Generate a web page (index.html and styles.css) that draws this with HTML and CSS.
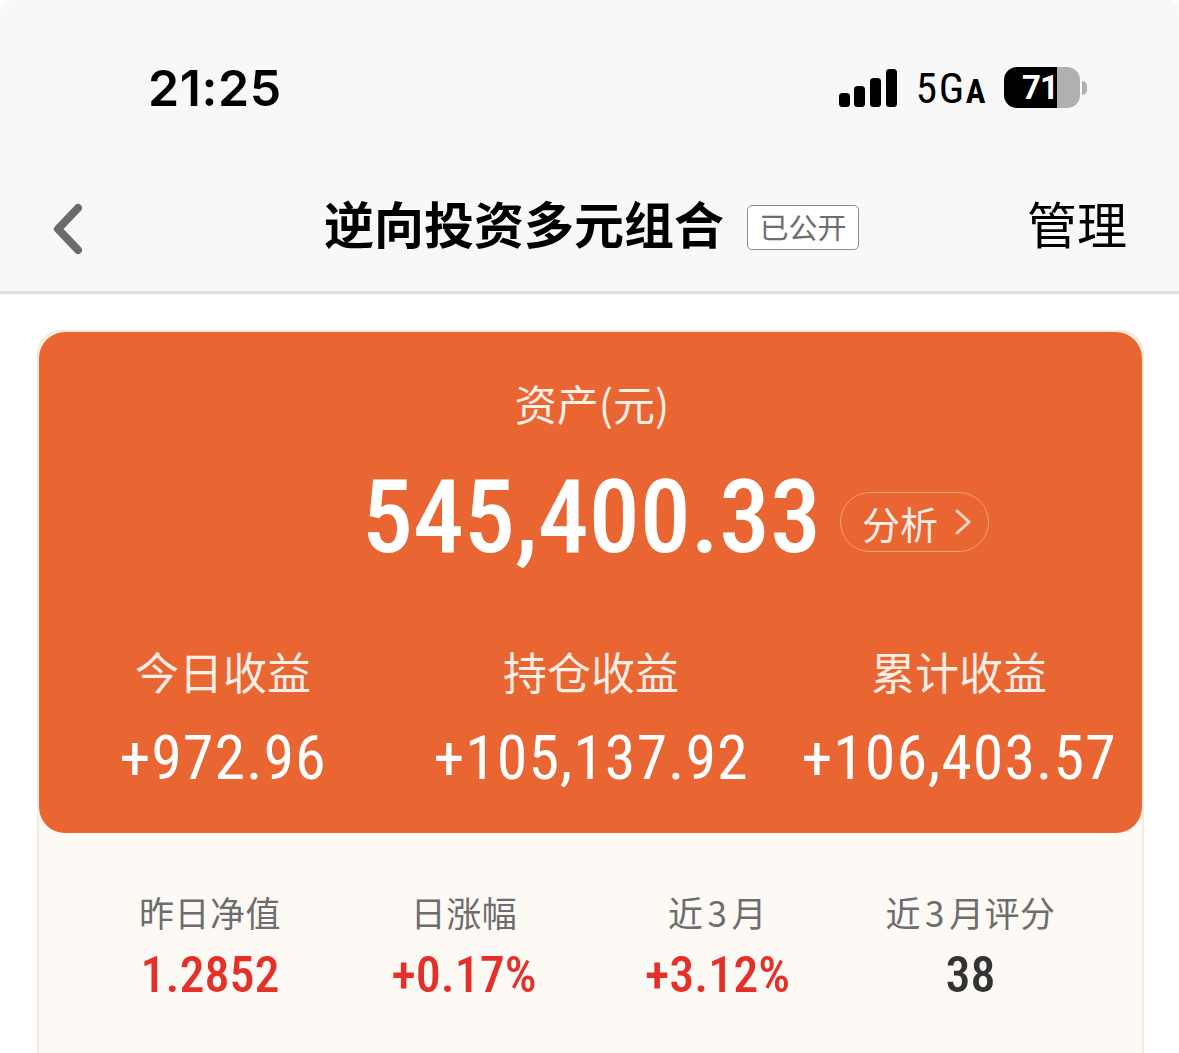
FILE: index.html
```html
<!DOCTYPE html>
<html lang="zh-CN">
  <head>
    <meta charset="UTF-8" />
    <meta name="viewport" content="width=device-width, initial-scale=1.0" />
    <title>逆向投资多元组合</title>
    <link rel="stylesheet" href="styles.css">
  </head>
  <body>
    <header class="top">
      <div class="status">
        <span class="time">21:25</span>
        <div class="status-right">
          <svg class="signal" width="58" height="38" viewBox="0 0 58 38">
            <rect x="0" y="24" width="11" height="14" rx="3.5" />
            <rect x="15" y="17" width="11" height="21" rx="3.5" />
            <rect x="31" y="9" width="11" height="29" rx="3.5" />
            <rect x="47" y="0" width="11" height="38" rx="3.5" />
          </svg>
          <span class="net">5G<small>A</small></span>
          <div class="battery">
            <div class="battery-body"><span class="battery-num">71</span></div>
            <span class="battery-tip"></span>
          </div>
        </div>
      </div>
      <div class="nav">
        <svg class="back" width="32" height="54" viewBox="0 0 32 54">
          <path d="M26 6 L6 27 L26 48" />
        </svg>
        <div class="nav-title">
          <h1>逆向投资多元组合</h1>
          <span class="tag">已公开</span>
        </div>
        <a class="manage">管理</a>
      </div>
    </header>

    <main class="card">
      <section class="panel">
        <div class="asset-label">资产(元)</div>
        <div class="asset-row">
          <span class="asset-value">545,400.33</span>
          <span class="analyse">分析
            <svg width="18" height="28" viewBox="0 0 18 28"><path d="M3 3 L15 14 L3 25" /></svg>
          </span>
        </div>
        <div class="gains">
          <div class="gain">
            <div class="gain-label">今日收益</div>
            <div class="gain-value">+972.96</div>
          </div>
          <div class="gain">
            <div class="gain-label">持仓收益</div>
            <div class="gain-value">+105,137.92</div>
          </div>
          <div class="gain">
            <div class="gain-label">累计收益</div>
            <div class="gain-value">+106,403.57</div>
          </div>
        </div>
      </section>
      <section class="stats">
        <div class="stat">
          <div class="stat-label">昨日净值</div>
          <div class="stat-value red">1.2852</div>
        </div>
        <div class="stat">
          <div class="stat-label">日涨幅</div>
          <div class="stat-value red">+0.17%</div>
        </div>
        <div class="stat">
          <div class="stat-label">近<span class="num">3</span>月</div>
          <div class="stat-value red">+3.12%</div>
        </div>
        <div class="stat">
          <div class="stat-label">近<span class="num">3</span>月评分</div>
          <div class="stat-value">38</div>
        </div>
      </section>
    </main>
  </body>
</html>
```

FILE: styles.css
```css
html {
  background: #fff;
}
body {
  margin: 0;
  width: 1179px;
  height: 1053px;
  overflow: hidden;
  background: #fff;
  font-family: "Noto Sans CJK SC", "Noto Sans", sans-serif;
  color: #000;
}
.top {
  height: 291px;
  background: #f8f8f8;
  border-bottom: 3px solid #dedede;
  border-radius: 12px 12px 0 0;
}
.status {
  height: 175px;
  display: flex;
  justify-content: space-between;
  align-items: center;
  padding: 0 92px 0 148px;
}
.time {
  font-family: "Inter", sans-serif;
  font-size: 50px;
  font-weight: 600;
  letter-spacing: 0.6px;
}
.status-right {
  display: flex;
  align-items: center;
}
.signal {
  fill: #000;
  margin-right: 19px;
}
.net {
  font-family: "Roboto", sans-serif;
  font-size: 43px;
  font-weight: 400;
  font-stretch: 75%;
  letter-spacing: 1.6px;
  margin-right: 17px;
}
.net small {
  font-size: 33px;
  font-weight: 700;
}
.battery {
  display: flex;
  align-items: center;
}
.battery-body {
  width: 76px;
  height: 41px;
  border-radius: 13px;
  background: linear-gradient(to right, #000 0 53px, #b0b0b0 53px);
}
.battery-num {
  display: block;
  padding-left: 18px;
  color: #fff;
  font-family: "Roboto", sans-serif;
  font-size: 33px;
  font-weight: 700;
  letter-spacing: -1px;
  line-height: 41px;
  white-space: nowrap;
}
.battery-tip {
  width: 5px;
  height: 14px;
  margin-left: 2px;
  background: #b0b0b0;
  border-radius: 0 7px 7px 0;
}
.nav {
  height: 117px;
  display: flex;
  align-items: center;
  padding: 0 52px 24px 52px;
  box-sizing: border-box;
}
.back {
  flex: none;
  margin-top: 14px;
  fill: none;
  stroke: #6b6b6b;
  stroke-width: 8;
  stroke-linecap: round;
  stroke-linejoin: round;
}
.nav-title {
  flex: 1;
  display: flex;
  align-items: center;
  padding-left: 240px;
}
.nav-title h1 {
  margin: 0;
  font-size: 50px;
  font-weight: 700;
  line-height: 60px;
  white-space: nowrap;
}
.tag {
  margin: 11px 0 0 23px;
  width: 112px;
  height: 45px;
  box-sizing: border-box;
  border: 1px solid #8e8e8e;
  border-radius: 5px;
  background: #fff;
  color: #6e6e6e;
  font-size: 29px;
  line-height: 41px;
  text-align: center;
  white-space: nowrap;
}
.manage {
  font-size: 50px;
  line-height: 60px;
}
.card {
  margin: 36px 35px 0 37px;
  height: 760px;
  box-sizing: border-box;
  background: #fdfaf6;
  border: 2px solid #f8ead8;
  border-bottom: 0;
  border-radius: 24px 24px 0 0;
}
.panel {
  height: 501px;
  box-sizing: border-box;
  padding-top: 43px;
  background: #e96531;
  border-radius: 26px;
  color: #fff;
  text-align: center;
}
.asset-label {
  padding-left: 3px;
  font-size: 42px;
  line-height: 56px;
  color: #fdeee6;
}
.asset-row {
  display: flex;
  align-items: center;
  margin-top: 36px;
  padding-left: 323px;
}
.asset-value {
  font-family: "Roboto", sans-serif;
  font-size: 102px;
  font-weight: 500;
  font-stretch: 75%;
  line-height: 100px;
}
.analyse {
  display: flex;
  align-items: center;
  gap: 16px;
  height: 60px;
  margin: 10px 0 0 19px;
  padding: 0 16px 0 21px;
  box-sizing: border-box;
  border: 1px solid #f3a07c;
  border-radius: 30px;
  font-size: 38px;
  color: #fdeee7;
}
.analyse svg {
  fill: none;
  stroke: #fbd5c4;
  stroke-width: 3;
  stroke-linecap: round;
}
.gains {
  display: grid;
  grid-template-columns: 368px 368px 368px;
  margin-top: 76px;
}
.gain-label {
  font-size: 44px;
  line-height: 56px;
  color: #fdeee6;
}
.gain-value {
  margin-top: 29px;
  font-family: "Roboto", sans-serif;
  font-size: 62px;
  font-weight: 450;
  font-stretch: 75%;
  letter-spacing: 1px;
  line-height: 60px;
  white-space: nowrap;
}
.stats {
  display: grid;
  grid-template-columns: 254px 254px 253px 253px;
  padding: 54px 0 0 44px;
  text-align: center;
}
.stat-label {
  color: #6d6d6d;
  font-size: 35px;
  letter-spacing: 0.5px;
  line-height: 50px;
}
.num {
  margin: 0 4px;
}
.stat-value {
  margin-top: 13px;
  font-family: "Roboto", sans-serif;
  font-size: 50px;
  font-weight: 500;
  font-stretch: 75%;
  line-height: 50px;
  color: #333;
}
.stat-value.red {
  color: #e5302a;
}
```
